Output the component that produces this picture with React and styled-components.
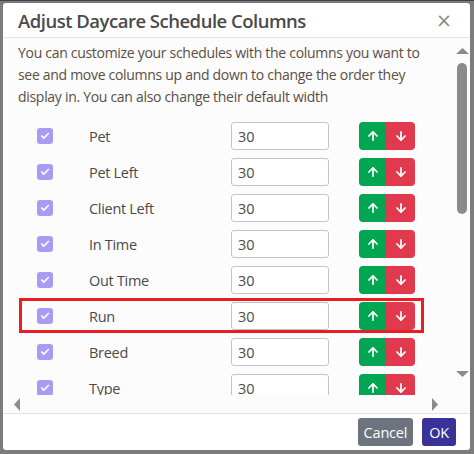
import React from 'react';
import styled, { createGlobalStyle } from 'styled-components';
import { ArrowUp, ArrowDown, Check } from 'lucide-react';

const GlobalStyle = createGlobalStyle`
  html, body {
    margin: 0;
    padding: 0;
    background: #7c7c7c;
    font-family: "Open Sans", "Noto Sans", sans-serif;
  }
`;

const Backdrop = styled.div`
  width: 474px;
  height: 454px;
  box-sizing: border-box;
  padding: 2px 4px 4px 3px;
  border-top: 1px solid #3b4250;
`;

const Dialog = styled.div`
  width: 467px;
  height: 447px;
  background: #fff;
  border-radius: 3px;
  display: flex;
  flex-direction: column;
  overflow: hidden;
`;

const Header = styled.div`
  height: 34px;
  display: flex;
  align-items: center;
  justify-content: space-between;
  padding: 0 18px 0 15px;
  border-bottom: 1px solid #e6e6e6;
`;

const Title = styled.h4`
  margin: 0;
  font-size: 18.5px;
  font-weight: 600;
  color: #4a4a4a;
  letter-spacing: -0.5px;
`;

const Close = styled.span`
  font-size: 19px;
  color: #8a8a8a;
  line-height: 1;
  font-family: "DejaVu Sans", sans-serif;
`;

const Body = styled.div`
  flex: 1;
  display: grid;
  grid-template-columns: 1fr 16px;
  grid-template-rows: 1fr 18px;
  background: #fcfcfc;
  min-height: 0;
`;

const Content = styled.div`
  overflow: hidden;
  padding: 4px 0 0 15px;
  min-height: 0;
`;

const Intro = styled.p`
  margin: 0 22px 10px 0;
  font-size: 14px;
  line-height: 22px;
  letter-spacing: -0.3px;
  color: #5a4e45;
`;

const List = styled.div`
  padding-left: 19px;
`;

const Row = styled.div`
  position: relative;
  height: 36px;
  display: flex;
  align-items: center;
`;

const Box = styled.span`
  width: 16px;
  height: 16px;
  border-radius: 3px;
  background: #a99bf3;
  display: flex;
  align-items: center;
  justify-content: center;
  color: #fff;
`;

const Label = styled.span`
  margin-left: 36px;
  width: 142px;
  font-size: 14.5px;
  letter-spacing: -0.3px;
  color: #4a4a4a;
`;

const WidthInput = styled.input`
  box-sizing: border-box;
  width: 98px;
  height: 28px;
  border: 1px solid #c4c4c4;
  border-radius: 3px;
  background: #fff;
  padding: 0 6px;
  font-family: inherit;
  font-size: 14.5px;
  color: #4a4a4a;
`;

const Group = styled.div`
  display: flex;
  margin-left: 30px;
  border-radius: 4px;
  overflow: hidden;
`;

const Move = styled.button`
  width: ${(p) => (p.$down ? 29 : 27)}px;
  height: 28px;
  border: 0;
  padding: 0;
  display: flex;
  align-items: center;
  justify-content: center;
  background: ${(p) => (p.$down ? '#e23a4d' : '#00a651')};
  color: #fff;
`;

const Highlight = styled.div`
  position: absolute;
  left: -18px;
  top: 0;
  width: 405px;
  height: 35px;
  box-sizing: border-box;
  border: 3px solid #ed1c24;
  pointer-events: none;
`;

const VBar = styled.div`
  display: flex;
  flex-direction: column;
  align-items: center;
  padding: 10px 0 18px;
`;

const Thumb = styled.div`
  width: 10px;
  height: 151px;
  margin-top: 9px;
  border-radius: 5px;
  background: #8b8b8b;
`;

const Spacer = styled.div`
  flex: 1;
`;

const HBar = styled.div`
  display: flex;
  align-items: center;
  justify-content: space-between;
  padding: 0 16px 0 11px;
`;

const Footer = styled.div`
  height: 36px;
  border-top: 1px solid #e2e2e2;
  display: flex;
  align-items: center;
  justify-content: flex-end;
  gap: 9px;
  padding-right: 14px;
`;

const Btn = styled.button`
  height: 28px;
  padding: 0 ${(p) => (p.$primary ? 7 : 6)}px;
  border: 0;
  border-radius: 3px;
  font-family: inherit;
  font-size: 14.5px;
  letter-spacing: -0.2px;
  color: #fff;
  background: ${(p) => (p.$primary ? '#3a3299' : '#6c757d')};
`;

const Tri = ({ dir }) => {
  const pts = {
    up: '0,6 6.5,0 13,6',
    down: '0,0 6.5,6 13,0',
    left: '6,0 6,13 0,6.5',
    right: '0,0 0,13 6,6.5',
  }[dir];
  const w = dir === 'up' || dir === 'down' ? 13 : 6;
  const h = dir === 'up' || dir === 'down' ? 6 : 13;
  return (
    <svg width={w} height={h} viewBox={`0 0 ${w} ${h}`}>
      <polygon points={pts} fill="#8b8b8b" />
    </svg>
  );
};

const columns = ['Pet', 'Pet Left', 'Client Left', 'In Time', 'Out Time', 'Run', 'Breed', 'Type'];

export default function App() {
  return (
    <>
      <GlobalStyle />
      <Backdrop>
        <Dialog>
          <Header>
            <Title>Adjust Daycare Schedule Columns</Title>
            <Close>×</Close>
          </Header>
          <Body>
            <Content>
              <Intro>
                You can customize your schedules with the columns you want to see and move
                columns up and down to change the order they display in. You can also change
                their default width
              </Intro>
              <List>
                {columns.map((name) => (
                  <Row key={name}>
                    <Box>
                      <Check size={10} strokeWidth={4} />
                    </Box>
                    <Label>{name}</Label>
                    <WidthInput defaultValue="30" />
                    <Group>
                      <Move>
                        <ArrowUp size={14} strokeWidth={3} />
                      </Move>
                      <Move $down>
                        <ArrowDown size={14} strokeWidth={3} />
                      </Move>
                    </Group>
                    {name === 'Run' && <Highlight />}
                  </Row>
                ))}
              </List>
            </Content>
            <VBar>
              <Tri dir="up" />
              <Thumb />
              <Spacer />
              <Tri dir="down" />
            </VBar>
            <HBar>
              <Tri dir="left" />
              <Tri dir="right" />
            </HBar>
            <div />
          </Body>
          <Footer>
            <Btn>Cancel</Btn>
            <Btn $primary>OK</Btn>
          </Footer>
        </Dialog>
      </Backdrop>
    </>
  );
}
